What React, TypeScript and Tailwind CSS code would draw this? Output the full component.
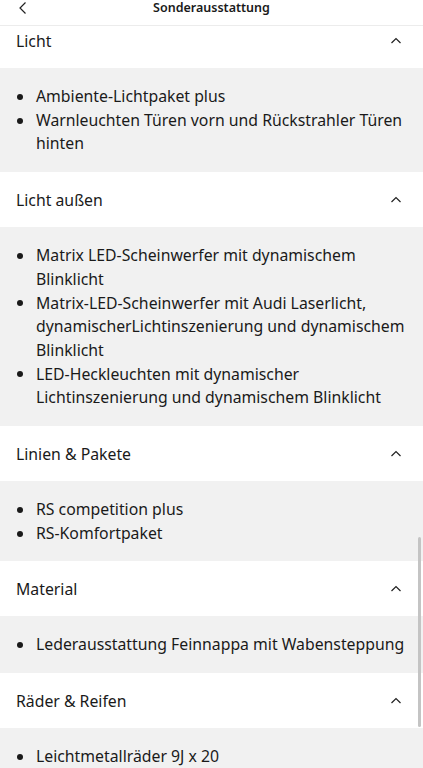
import React from 'react';

interface Section {
  title: string;
  items: string[];
}

const sections: Section[] = [
  { title: 'Licht', items: ['Ambiente-Lichtpaket plus', 'Warnleuchten Türen vorn und Rückstrahler Türen hinten'] },
  {
    title: 'Licht außen',
    items: [
      'Matrix LED-Scheinwerfer mit dynamischem Blinklicht',
      'Matrix-LED-Scheinwerfer mit Audi Laserlicht, dynamischerLichtinszenierung und dynamischem Blinklicht',
      'LED-Heckleuchten mit dynamischer Lichtinszenierung und dynamischem Blinklicht',
    ],
  },
  { title: 'Linien & Pakete', items: ['RS competition plus', 'RS-Komfortpaket'] },
  { title: 'Material', items: ['Lederausstattung Feinnappa mit Wabensteppung'] },
  { title: 'Räder & Reifen', items: ['Leichtmetallräder 9J x 20', 'Sommerreifen 265/35 R20'] },
];

const ChevronUp = () => (
  <svg width="14" height="14" viewBox="0 0 14 14" fill="none" stroke="#222" strokeWidth={1.2}>
    <path d="M2.5 9L7 4.5L11.5 9" />
  </svg>
);

const App: React.FC = () => {
  return (
    <div className="w-[423px] h-[768px] bg-white flex flex-col overflow-hidden relative text-[#1a1a1a]" style={{ fontFamily: '"Noto Sans", "Open Sans", sans-serif' }}>
      <div className="h-[26px] shrink-0 flex items-start justify-center relative border-b border-[#ececec] z-10 bg-white">
        <button className="absolute left-[16px] top-0 w-[14px] h-[16px] flex items-center justify-center">
          <svg width="10" height="14" viewBox="0 0 10 14" fill="none" stroke="#222" strokeWidth={1.2}>
            <path d="M7.5 1.5L2 7L7.5 12.5" />
          </svg>
        </button>
        <span className="text-[12.5px] font-semibold leading-[15px]">Sonderausstattung</span>
      </div>

      <div className="flex-1 overflow-hidden">
        <div className="-mt-[13px] flex flex-col">
          {sections.map((s) => (
            <div key={s.title} className="flex flex-col">
              <div className="h-[55px] flex items-center justify-between pl-4 pr-[20px] bg-white">
                <span className="text-[15.8px] leading-[24px]">{s.title}</span>
                <ChevronUp />
              </div>
              <ul className="bg-[#f1f1f1] pt-[17px] pb-[16px] pl-4 pr-3">
                {s.items.map((it) => (
                  <li key={it} className="flex text-[15.8px] leading-[23.7px]">
                    <span className="w-[20px] shrink-0 flex items-center h-[23.7px]">
                      <span className="w-[6px] h-[6px] rounded-full bg-[#1a1a1a] ml-[1px]" />
                    </span>
                    <span>{it}</span>
                  </li>
                ))}
              </ul>
            </div>
          ))}
        </div>
      </div>

      <div className="absolute right-[2px] top-[537px] w-[3px] h-[190px] rounded-full bg-[#c4c4c4]" />
    </div>
  );
};

export default App;
